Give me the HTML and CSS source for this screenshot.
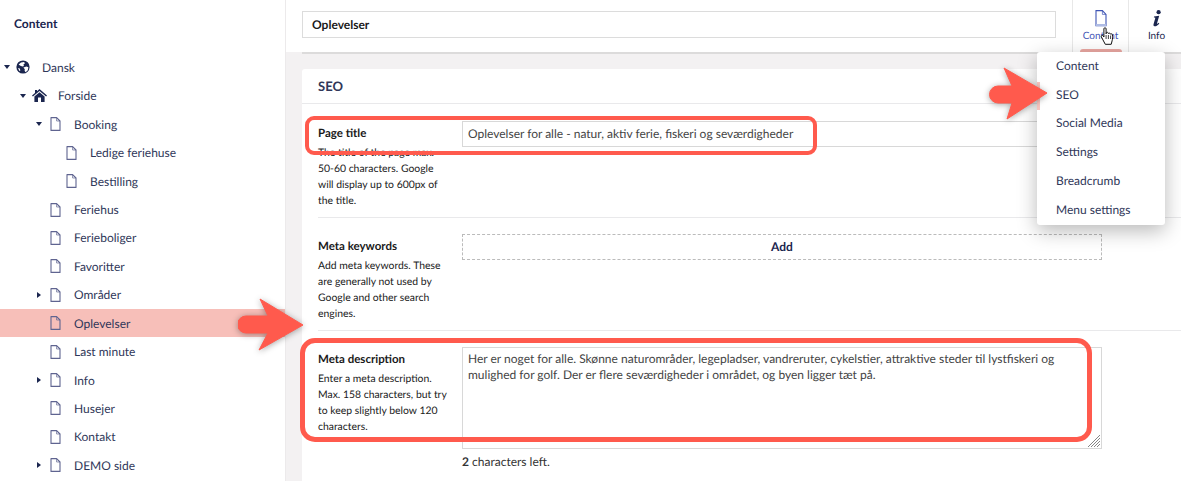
FILE: index.html
```html
<!DOCTYPE html>
<html lang="da">
<head>
<meta charset="utf-8">
<title>Oplevelser</title>
<link rel="stylesheet" href="styles.css">
</head>
<body>
<svg class="defs" width="0" height="0" aria-hidden="true">
  <defs>
    <symbol id="file" viewBox="0 0 11 14"><path d="M1 .6h5.6L10 4v9.4H1z" fill="#fff" stroke="#5f6490" stroke-width="1.1" stroke-linejoin="round"/><path d="M6.6.6V4H10" fill="none" stroke="#5f6490" stroke-width=".7"/></symbol>
    <symbol id="file-sel" viewBox="0 0 11 14"><path d="M1 .6h5.6L10 4v9.4H1z" fill="#f7bfb9" stroke="#5f6490" stroke-width="1.1" stroke-linejoin="round"/><path d="M6.6.6V4H10" fill="none" stroke="#5f6490" stroke-width=".7"/></symbol>
    <symbol id="car-d" viewBox="0 0 6 4"><path d="M0 0h6L3 4z" fill="#1b264f"/></symbol>
    <symbol id="car-r" viewBox="0 0 4 6"><path d="M0 0v6l4-3z" fill="#1b264f"/></symbol>
  </defs>
</svg>

<aside class="sidebar">
  <div class="side-title">Content</div>
  <ul class="tree">
    <li class="row lvl0"><span class="caret"><svg class="car-d"><use href="#car-d"/></svg></span><span class="ico"><svg class="globe" viewBox="0 0 14 14"><circle cx="7" cy="7" r="6.6" fill="#1b264f"/><path d="M2.6 4.4 5 2.4l3-.4 1 1.2L7.4 4.6 8 6 6.4 6.6 4.4 5.8zM7.4 7.6l3-1 2 .6-.6 3-2.2 2-1-1.4.2-1.6zM2 8l1.8.6.6 2-1 .4z" fill="#fff"/></svg></span><span>Dansk</span></li>
    <li class="row lvl1"><span class="caret"><svg class="car-d"><use href="#car-d"/></svg></span><span class="ico"><svg class="house" viewBox="0 0 15 13"><path d="M7.5 0 15 6.6l-.9 1L7.5 2 .9 7.6 0 6.6 3 4V.9h2v1.4z" fill="#1b264f"/><path d="M2.4 7.6 7.5 3.2l5.1 4.4V13H9V8.6H6V13H2.4z" fill="#1b264f"/></svg></span><span>Forside</span></li>
    <li class="row lvl2"><span class="caret"><svg class="car-d"><use href="#car-d"/></svg></span><span class="ico file-ico"><svg class="file"><use href="#file"/></svg></span><span>Booking</span></li>
    <li class="row lvl3"><span class="caret"></span><span class="ico file-ico"><svg class="file"><use href="#file"/></svg></span><span>Ledige feriehuse</span></li>
    <li class="row lvl3"><span class="caret"></span><span class="ico file-ico"><svg class="file"><use href="#file"/></svg></span><span>Bestilling</span></li>
    <li class="row lvl2"><span class="caret"></span><span class="ico file-ico"><svg class="file"><use href="#file"/></svg></span><span>Feriehus</span></li>
    <li class="row lvl2"><span class="caret"></span><span class="ico file-ico"><svg class="file"><use href="#file"/></svg></span><span>Ferieboliger</span></li>
    <li class="row lvl2"><span class="caret"></span><span class="ico file-ico"><svg class="file"><use href="#file"/></svg></span><span>Favoritter</span></li>
    <li class="row lvl2"><span class="caret"><svg class="car-r"><use href="#car-r"/></svg></span><span class="ico file-ico"><svg class="file"><use href="#file"/></svg></span><span>Områder</span></li>
    <li class="row lvl2 selected"><span class="caret"></span><span class="ico file-ico"><svg class="file"><use href="#file-sel"/></svg></span><span>Oplevelser</span></li>
    <li class="row lvl2"><span class="caret"></span><span class="ico file-ico"><svg class="file"><use href="#file"/></svg></span><span>Last minute</span></li>
    <li class="row lvl2"><span class="caret"><svg class="car-r"><use href="#car-r"/></svg></span><span class="ico file-ico"><svg class="file"><use href="#file"/></svg></span><span>Info</span></li>
    <li class="row lvl2"><span class="caret"></span><span class="ico file-ico"><svg class="file"><use href="#file"/></svg></span><span>Husejer</span></li>
    <li class="row lvl2"><span class="caret"></span><span class="ico file-ico"><svg class="file"><use href="#file"/></svg></span><span>Kontakt</span></li>
    <li class="row lvl2"><span class="caret"><svg class="car-r"><use href="#car-r"/></svg></span><span class="ico file-ico"><svg class="file"><use href="#file"/></svg></span><span>DEMO side</span></li>
  </ul>
</aside>

<main class="main">
  <header class="topbar">
    <div class="name-input">Oplevelser</div>
    <nav class="tabs">
      <div class="tab tab-active">
        <svg class="tab-file" viewBox="0 0 12 17"><path d="M1 .6h6.4L11 4.400V15.800H1z" fill="#fff" stroke="#3f55b5" stroke-width="1.1"/><path d="M7.400.6v3.800H11" fill="none" stroke="#3f55b5" stroke-width=".7"/><path d="M1 14h10v2H1z" fill="#aebbe4"/></svg>
        <span>Content</span>
        <i class="tab-mark"></i>
      </div>
      <div class="tab">
        <svg class="tab-info" viewBox="0 0 12 17"><circle cx="7.6" cy="2.2" r="2.1" fill="#1b264f"/><path d="M3 6.400 8.200 5.800 6 13.400c-.1.500.4.600 1.700-.6l.6.600C6.800 15.400 5 16.400 3.600 16.200 2.400 16 2.300 15 2.600 13.900L4.300 8c.1-.4-.3-.6-1.400-.6z" fill="#1b264f"/></svg>
        <span>Info</span>
      </div>
    </nav>
  </header>

  <div class="content">
    <section class="card">
      <h2 class="card-head">SEO</h2>
      <div class="prop">
        <div class="prop-label">
          <b>Page title</b>
          <p>The title of the page max. 50-60 characters. Google will display up to 600px of the title.</p>
        </div>
        <div class="field">Oplevelser for alle - natur, aktiv ferie, fiskeri og seværdigheder</div>
      </div>
      <div class="prop">
        <div class="prop-label">
          <b>Meta keywords</b>
          <p>Add meta keywords. These are generally not used by Google and other search engines.</p>
        </div>
        <div class="add-btn">Add</div>
      </div>
      <div class="prop prop-last">
        <div class="prop-label">
          <b>Meta description</b>
          <p>Enter a meta description. Max. 158 characters, but try to keep slightly below 120 characters.</p>
        </div>
        <div class="field-col">
          <div class="textarea">Her er noget for alle. Skønne naturområder, legepladser, vandreruter, cykelstier, attraktive steder til lystfiskeri og mulighed for golf. Der er flere seværdigheder i området, og byen ligger tæt på.
            <svg class="grip" viewBox="0 0 14 14"><path d="M1 13 13 1M4 13 13 4M7 13 13 7M10 13 13 10" stroke="#777" stroke-width=".9" fill="none"/></svg>
          </div>
          <div class="count"><b>2</b> characters left.</div>
        </div>
      </div>
    </section>
  </div>
</main>

<ul class="menu">
  <li>Content</li>
  <li>SEO</li>
  <li>Social Media</li>
  <li>Settings</li>
  <li>Breadcrumb</li>
  <li>Menu settings</li>
</ul>

<i class="pink-strip"></i>
<i class="mark mark-title"></i>
<i class="mark mark-desc"></i>

<svg class="arrow arrow-tree" viewBox="0 0 70 54"><path d="M8 18H30L22 1 65 27 21 52 30 35H8a8.500 8.500 0 0 1 0-17z" fill="#ff5a4d" stroke="#ff5a4d" stroke-linejoin="round"/></svg>
<svg class="arrow arrow-menu" viewBox="0 0 70 54"><path d="M16 19H30L22 1 65 26 25 52 30 36H16a8.500 8.500 0 0 1 0-17z" fill="#ff5a4d" stroke="#ff5a4d" stroke-linejoin="round"/></svg>

<svg class="hand" viewBox="0 0 14 19"><path d="M3.400 1.800c0-1.400 2.200-1.400 2.200 0v5l.2-1c.6-.9 2-.5 2 .5l.1.300c.5-.8 1.900-.6 2 .5.600-.6 1.900-.3 2 .7.200 2 .3 4-.3 6l-.9 3.500H4.800L2.500 13 .8 9.800c-.5-1.200.9-2.100 1.800-1l.8 1.200z" fill="#fff" stroke="#111" stroke-width="1" stroke-linejoin="round"/><path d="M5.600 8v4M7.900 8v4M10.100 8.500v3.500" stroke="#111" stroke-width=".8"/></svg>
</body>
</html>
```
FILE: styles.css
```css
* { box-sizing: border-box; }
html, body { margin: 0; height: 481px; overflow: hidden; }
body {
  position: relative;
  display: flex;
  background: #fff;
  font-family: Lato, "Open Sans", sans-serif;
  font-size: 12px;
  color: #1b264f;
  text-rendering: geometricPrecision;
}
.defs { position: absolute; }

/* sidebar */
.sidebar {
  width: 286px;
  flex: none;
  background: #fff;
  border-right: 1px solid #eceaeb;
}
.side-title {
  height: 53.2px;
  padding: 16px 0 0 14px;
  font-weight: 700;
  font-size: 12px;
  line-height: 16px;
}
.tree { list-style: none; margin: 0; padding: 0; }
.row {
  display: flex;
  align-items: center;
  height: 28.43px;
  color: #303759;
}
.lvl0 { padding-left: 4px; }
.lvl1 { padding-left: 20px; }
.lvl2 { padding-left: 36px; }
.lvl3 { padding-left: 52px; }
.selected { background: #f7bfb9; }
.caret { width: 12px; flex: none; display: flex; align-items: center; }
.car-d { width: 6px; height: 4px; }
.car-r { width: 4px; height: 6px; margin-left: 1px; }
.ico { width: 26px; flex: none; display: flex; align-items: center; }
.file-ico { padding-left: 2px; }
.file { width: 11px; height: 14px; }
.globe { width: 14px; height: 14px; }
.house { width: 15px; height: 13px; }

/* main */
.main { flex: 1; min-width: 0; display: flex; flex-direction: column; background: #f3f1f2; }
.topbar {
  height: 52px;
  flex: none;
  display: flex;
  justify-content: space-between;
  padding-left: 16px;
  background: #fff;
}
.name-input {
  width: 754px;
  height: 27px;
  margin-top: 11px;
  padding-left: 9px;
  border: 1px solid #dcdcdc;
  font-weight: 700;
  font-size: 12px;
  line-height: 25px;
  color: #1a1a1a;
}
.tabs { display: flex; margin-right: -3px; }
.tab {
  position: relative;
  width: 56px;
  border-left: 1px solid #e8e8e8;
  display: flex;
  flex-direction: column;
  align-items: center;
  padding-top: 10px;
  font-size: 10px;
  line-height: 14px;
  color: #1b264f;
}
.tab span { margin-top: 2px; }
.tab-active { color: #3f55b5; }
.tab-file, .tab-info { width: 12px; height: 17px; }
.tab-mark {
  position: absolute;
  left: 7px;
  right: 6px;
  bottom: 0;
  height: 3px;
  background: #eba8a3;
  border-radius: 3px 3px 0 0;
}
.content { flex: 1; padding-left: 16px; padding-top: 17px; position: relative; }
.content::before {
  content: "";
  position: absolute;
  left: 16px;
  right: 0;
  top: 0;
  height: 2px;
  background: #dcdbdb;
}
.card { background: #fff; height: 100%; border-radius: 3px 0 0 0; }
.card-head {
  margin: 0;
  height: 35px;
  padding-left: 16px;
  font-size: 13px;
  font-weight: 700;
  line-height: 35px;
  color: #303759;
  border-bottom: 1px solid #e9e9eb;
}
.prop {
  margin-left: 16px;
  padding: 16px 0 8px;
  display: flex;
  border-bottom: 1px solid #e9e9eb;
}
.card-head + .prop { padding-top: 17px; }
.prop-last { border-bottom: 0; padding-bottom: 0; }
.prop-label { width: 144px; flex: none; padding-right: 14px; color: #1a1a1a; font-size: 10.4px; }
.prop-label b { display: block; font-size: 11.5px; line-height: 19px; padding-top: 3px; }
.prop-label p { margin: 2px 0 0; line-height: 16px; }
.field {
  width: 640px;
  height: 26px;
  padding-left: 5px;
  border: 1px solid #d8d8d8;
  font-size: 12px;
  line-height: 24px;
  color: #444;
}
.add-btn {
  width: 640px;
  height: 26px;
  border: 1px dashed #bbb;
  text-align: center;
  font-weight: 700;
  font-size: 12px;
  line-height: 24px;
}
.field-col { width: 640px; }
.textarea {
  position: relative;
  height: 102px;
  padding: 3px 30px 0 5px;
  border: 1px solid #d8d8d8;
  font-size: 12px;
  line-height: 16px;
  color: #444;
}
.grip { position: absolute; right: 0; bottom: 0; width: 14px; height: 14px; }
.count { margin-top: 5px; font-size: 12px; line-height: 16px; color: #333; }

/* overlays */
.menu {
  position: absolute;
  left: 1037px;
  top: 52px;
  width: 128px;
  height: 173px;
  margin: 0;
  padding: 0;
  list-style: none;
  background: #fff;
  border-radius: 3px;
  box-shadow: 0 6px 20px rgba(0, 0, 0, .28);
  z-index: 2;
}
.menu li {
  height: 28.72px;
  padding-left: 19px;
  font-size: 12px;
  line-height: 28.72px;
  color: #303759;
}
.pink-strip { position: absolute; left: 1037px; top: 82px; width: 3px; height: 28px; background: #f7c4bf; z-index: 3; }
.mark { position: absolute; border: 4.5px solid #ff5a4d; z-index: 3; }
.mark-title { left: 305px; top: 116px; width: 512px; height: 39px; border-radius: 9px; }
.mark-desc { left: 300px; top: 338px; width: 792px; height: 104px; border-radius: 15px; border-width: 5px; }
.arrow { position: absolute; width: 70px; height: 54px; z-index: 4; filter: drop-shadow(0 1px 3px rgba(0, 0, 0, .35)); }
.arrow-tree { left: 238px; top: 298px; }
.arrow-menu { left: 982px; top: 67px; }
.hand { position: absolute; left: 1100px; top: 27px; width: 15px; height: 19px; z-index: 5; }
```
